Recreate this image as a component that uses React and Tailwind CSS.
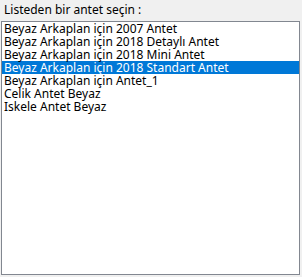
import React, { useState } from 'react';

const items = [
  'Beyaz Arkaplan için 2007 Antet',
  'Beyaz Arkaplan için 2018 Detaylı Antet',
  'Beyaz Arkaplan için 2018 Mini Antet',
  'Beyaz Arkaplan için 2018 Standart Antet',
  'Beyaz Arkaplan için Antet_1',
  'Celik Antet Beyaz',
  'Iskele Antet Beyaz',
];

const App = () => {
  const [selected, setSelected] = useState(3);

  return (
    <div className="w-[302px] h-[277px] bg-[#f0f0f0] text-black text-[12px] leading-[13px] font-['Segoe_UI','Noto_Sans',sans-serif] pt-[3px]">
      <div className="pl-[4px] h-[18px]">Listeden bir antet seçin :</div>
      {/* List box */}
      <div className="ml-[1px] w-[299px] h-[254px] border border-[#828790] bg-white">
        {items.map((item, i) => (
          <div
            key={item}
            onClick={() => setSelected(i)}
            className={`h-[13px] pl-[2px] whitespace-nowrap ${
              i === selected ? 'bg-[#0078d7] text-white' : ''
            }`}
          >
            {item}
          </div>
        ))}
      </div>
    </div>
  );
};

export default App;
